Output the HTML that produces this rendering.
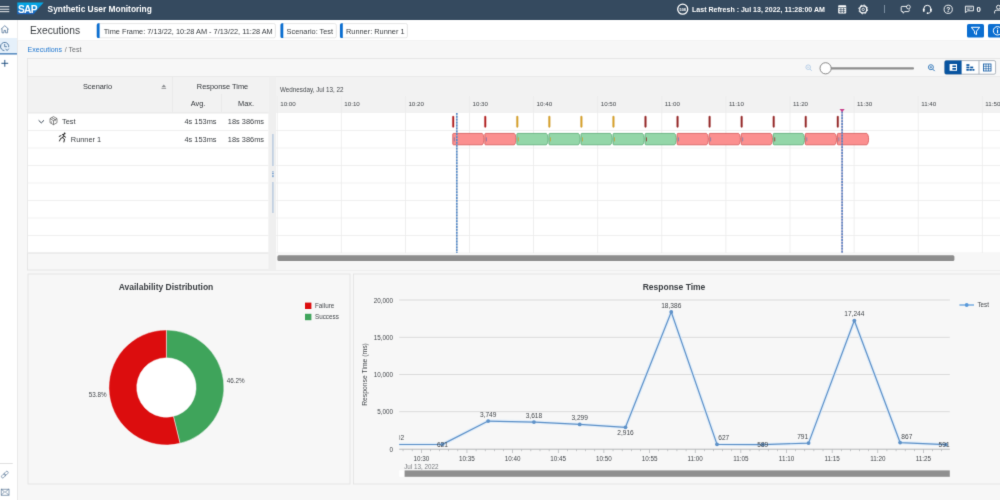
<!DOCTYPE html>
<html><head><meta charset="utf-8"><title>Synthetic User Monitoring</title>
<style>
html,body{margin:0;padding:0;width:1000px;height:500px;overflow:hidden;background:#f7f7f7;}
body{font-family:"Liberation Sans", sans-serif;position:relative;}
svg{position:absolute;left:0;top:0;font-family:"Liberation Sans", sans-serif;will-change:transform;}
#wrap{position:absolute;left:0;top:0;width:1000px;height:500px;overflow:hidden;}
</style></head><body>
<div id="wrap">
<svg width="1000" height="500" viewBox="0 0 1000 500">
<defs><filter id="soft" x="0" y="0" width="1000" height="500" filterUnits="userSpaceOnUse" color-interpolation-filters="sRGB"><feConvolveMatrix order="3" kernelMatrix="0.011 0.084 0.011 0.084 0.62 0.084 0.011 0.084 0.011" edgeMode="duplicate" preserveAlpha="true"/></filter></defs>
<g filter="url(#soft)">
<rect x="0" y="0" width="1000" height="500" fill="#f7f7f7"/>
<g id="shell">
<rect x="0" y="0" width="1000" height="20" fill="#354a5f"/>
<rect x="0" y="6.25" width="9.3" height="0.9" fill="#fff"/>
<rect x="0" y="8.75" width="9.3" height="0.9" fill="#fff"/>
<rect x="0" y="11.25" width="9.3" height="0.9" fill="#fff"/>
<defs><linearGradient id="sapg" x1="0" y1="0" x2="0" y2="1"><stop offset="0" stop-color="#00b1eb"/><stop offset="1" stop-color="#1e5fbb"/></linearGradient></defs>
<path d="M17.3 2.4 H43.6 L33.6 14.2 H17.3 Z" fill="url(#sapg)"/>
<text x="18" y="12.7" font-size="10.2" fill="#fff" text-anchor="start" font-weight="bold" letter-spacing="-0.7">SAP</text>
<text x="47.6" y="11.9" font-size="8.4" fill="#fff" text-anchor="start" font-weight="bold" >Synthetic User Monitoring</text>
<circle cx="682.7" cy="9.2" r="5" fill="none" stroke="#fff" stroke-width="1.3"/>
<text x="682.7" y="10.6" font-size="3.8" fill="#fff" text-anchor="middle" font-weight="bold" >508</text>
<text x="692" y="11.9" font-size="7.05" fill="#fff" text-anchor="start" font-weight="bold" >Last Refresh : Jul 13, 2022, 11:28:00 AM</text>
<rect x="838.2" y="5.2" width="8" height="8.4" rx="0.8" fill="#fff"/>
<path d="M838.2 7.6 h8 M839 9.7 h6.4 M839 11.7 h6.4 M840.9 8 v5 M843.6 8 v5" stroke="#354a5f" stroke-width="0.7" fill="none"/>
<circle cx="863.2" cy="9.4" r="3.5" fill="none" stroke="#fff" stroke-width="1.1"/>
<circle cx="863.2" cy="9.4" r="4.4" fill="none" stroke="#fff" stroke-width="1" stroke-dasharray="1.7 1.75"/>
<circle cx="863.2" cy="9.4" r="1.2" fill="none" stroke="#fff" stroke-width="0.8"/>
<rect x="884" y="5" width="0.9" height="8" fill="#8396a8"/>
<path d="M902 6.4 h5 M902 6.4 a0.8 0.8 0 0 0 -0.8 0.8 v3.6 a0.8 0.8 0 0 0 0.8 0.8 h1 v1.6 l1.8 -1.6 h3.6 a0.8 0.8 0 0 0 0.8 -0.8 v-1.4" fill="none" stroke="#fff" stroke-width="0.9" stroke-linejoin="round"/>
<circle cx="908.4" cy="7" r="1.9" fill="none" stroke="#fff" stroke-width="0.8"/>
<path d="M923.8 10.2 v-1.4 a3.5 3.5 0 0 1 7 0 v1.4" fill="none" stroke="#fff" stroke-width="1"/>
<rect x="922.9" y="8.6" width="1.7" height="3.2" rx="0.6" fill="#fff"/><rect x="930" y="8.6" width="1.7" height="3.2" rx="0.6" fill="#fff"/>
<path d="M930.9 11.6 a3 2 0 0 1 -2.6 1.6" fill="none" stroke="#fff" stroke-width="0.8"/><circle cx="927.6" cy="13.2" r="0.9" fill="#fff"/>
<circle cx="948.2" cy="9.3" r="4.1" fill="none" stroke="#fff" stroke-width="0.9"/>
<text x="948.2" y="11.7" font-size="6.6" fill="#fff" text-anchor="middle" font-weight="bold" >?</text>
<path d="M965.4 6.2 h8 v4.6 h-5.6 l-2.4 1.8 z" fill="none" stroke="#fff" stroke-width="0.9" stroke-linejoin="round"/>
<path d="M966.8 8 h5.2 M966.8 9.4 h3" stroke="#fff" stroke-width="0.6"/>
<text x="976.4" y="12.2" font-size="7.8" fill="#fff" text-anchor="start" font-weight="bold" >0</text>
<circle cx="998.4" cy="7.2" r="1.9" fill="none" stroke="#fff" stroke-width="0.9"/>
<path d="M994.6 13.4 v-1.6 a1.6 1.6 0 0 1 1.6 -1.6 h5" fill="none" stroke="#fff" stroke-width="0.9"/>
</g>
<g id="side">
<rect x="0" y="20" width="17" height="480" fill="#fff"/>
<rect x="17" y="20" width="0.8" height="480" fill="#e5e5e5"/>
<rect x="0" y="38" width="17" height="16" fill="#e5f0fa"/>
<rect x="0" y="53.4" width="17" height="1" fill="#0854a0"/>
<path d="M0.9 29.3 l3.9 -3.6 l3.9 3.6 M2 28.6 v4.2 h2 v-2.4 h1.6 v2.4 h2 v-4.2" fill="none" stroke="#56769a" stroke-width="0.8" stroke-linejoin="round"/>
<path d="M4.4 50.6 a4.1 4.1 0 1 1 4.3 -3.4" fill="none" stroke="#3f6a97" stroke-width="0.85"/>
<path d="M4.7 44 v2.7 h2.2" fill="none" stroke="#3f6a97" stroke-width="0.8"/>
<path d="M5.6 48.8 l1.5 1.8 l1.7 -2" fill="none" stroke="#3f6a97" stroke-width="0.8"/>
<path d="M1.4 63.3 h6.8 M4.8 59.9 v6.8" stroke="#1f4e80" stroke-width="0.95" fill="none"/>
<rect x="0" y="463" width="12.8" height="0.8" fill="#d9d9d9"/>
<g transform="translate(4.8 474.6) rotate(-45)" fill="none" stroke="#5b7897" stroke-width="0.65"><rect x="-4.2" y="-1.3" width="4.8" height="2.6" rx="1.3"/><rect x="-0.6" y="-1.3" width="4.8" height="2.6" rx="1.3"/></g>
<rect x="1.2" y="489.2" width="7.8" height="6" fill="none" stroke="#5b7897" stroke-width="0.7"/><path d="M1.2 489 l3.8 3.4 l3.8 -3.4 M1.2 495.2 l2.8 -2.8 M8.8 495.2 l-2.8 -2.8" fill="none" stroke="#5b7897" stroke-width="0.7"/>
</g>
<g id="ptitle">
<rect x="17.8" y="20" width="983" height="20.5" fill="#fff"/>
<rect x="17.8" y="40.2" width="983" height="0.6" fill="#efefef"/>
<text x="30" y="33.8" font-size="10.25" fill="#3a3e42" text-anchor="start" font-weight="normal" >Executions</text>
<rect x="96.8" y="23.6" width="178.6" height="14.2" rx="1.6" fill="#fff" stroke="#dcdcdc" stroke-width="0.7"/>
<path d="M99.6 23.3 h-1.2 a1.6 1.6 0 0 0 -1.6 1.6 v11.6 a1.6 1.6 0 0 0 1.6 1.6 h1.2 z" fill="#0a6ed1"/>
<text x="103.8" y="33.5" font-size="7.36" fill="#3a3e42" text-anchor="start" font-weight="normal" >Time Frame: 7/13/22, 10:28 AM - 7/13/22, 11:28 AM</text>
<rect x="280.5" y="23.6" width="55.8" height="14.2" rx="1.6" fill="#fff" stroke="#dcdcdc" stroke-width="0.7"/>
<path d="M283.3 23.3 h-1.2 a1.6 1.6 0 0 0 -1.6 1.6 v11.6 a1.6 1.6 0 0 0 1.6 1.6 h1.2 z" fill="#0a6ed1"/>
<text x="286.6" y="33.5" font-size="7.36" fill="#3a3e42" text-anchor="start" font-weight="normal" >Scenario: Test</text>
<rect x="340" y="23.6" width="67.4" height="14.2" rx="1.6" fill="#fff" stroke="#dcdcdc" stroke-width="0.7"/>
<path d="M342.8 23.3 h-1.2 a1.6 1.6 0 0 0 -1.6 1.6 v11.6 a1.6 1.6 0 0 0 1.6 1.6 h1.2 z" fill="#0a6ed1"/>
<text x="346" y="33.5" font-size="7.36" fill="#3a3e42" text-anchor="start" font-weight="normal" >Runner: Runner 1</text>
<rect x="967" y="24" width="17" height="13.6" rx="1.6" fill="#0a6ed1"/>
<rect x="988" y="24" width="17" height="13.6" rx="1.6" fill="#0a6ed1"/>
<path d="M971.3 27.3 h8.4 l-3.2 3.9 v3.4 l-2 -1.2 v-2.2 z" fill="none" stroke="#fff" stroke-width="1" stroke-linejoin="round"/>
<circle cx="997.5" cy="30.8" r="4.2" fill="none" stroke="#fff" stroke-width="1"/>
<rect x="997" y="30" width="1.1" height="3.2" fill="#fff"/><rect x="997" y="28.2" width="1.1" height="1.1" fill="#fff"/>
<text x="27.6" y="52.1" font-size="7.05" fill="#1f77d0" text-anchor="start" font-weight="normal" >Executions</text>
<text x="64.8" y="52.1" font-size="7.05" fill="#6a6d70" text-anchor="start" font-weight="normal" >/ Test</text>
</g>
<g id="gantt">
<rect x="27.5" y="58.5" width="980" height="211.5" fill="#f7f7f7" stroke="#e2e2e2" stroke-width="0.8"/>
<rect x="27.5" y="76" width="980" height="0.8" fill="#e4e4e4"/>
<rect x="27.9" y="76.8" width="240.6" height="36.2" fill="#f2f2f2"/>
<rect x="276" y="76.8" width="724" height="36.2" fill="#f2f2f2"/>
<rect x="27.9" y="113" width="240.6" height="140" fill="#fff"/>
<rect x="276" y="113" width="724" height="140" fill="#fff"/>
<rect x="268.5" y="76.4" width="7.5" height="193" fill="#efefef"/>
<rect x="272.6" y="134" width="0.7" height="32" fill="#7fa3cc"/>
<rect x="272.6" y="182" width="0.7" height="31" fill="#7fa3cc"/>
<rect x="272" y="171.6" width="1.8" height="0.7" fill="#4f86c4"/>
<rect x="272" y="173.2" width="1.8" height="0.7" fill="#4f86c4"/>
<rect x="272" y="174.79999999999998" width="1.8" height="0.7" fill="#4f86c4"/>
<rect x="272" y="176.4" width="1.8" height="0.7" fill="#4f86c4"/>
<rect x="27.9" y="112.6" width="240.6" height="0.8" fill="#e4e4e4"/>
<rect x="172" y="76.4" width="0.8" height="36" fill="#e8e8e8"/>
<rect x="221" y="94" width="0.8" height="18" fill="#e8e8e8"/>
<text x="97.5" y="88.6" font-size="7.4" fill="#32363a" text-anchor="middle" font-weight="normal" >Scenario</text>
<path d="M161.5 87.2 l2.3 -2.6 l2.3 2.6 z M161.5 88 h4.6 v0.7 h-4.6 z" fill="#8a8d90"/>
<text x="222.5" y="88.6" font-size="7.4" fill="#32363a" text-anchor="middle" font-weight="normal" >Response Time</text>
<text x="198" y="106.2" font-size="7.4" fill="#32363a" text-anchor="middle" font-weight="normal" >Avg.</text>
<text x="246" y="106.2" font-size="7.4" fill="#32363a" text-anchor="middle" font-weight="normal" >Max.</text>
<rect x="27.9" y="130.10" width="240.6" height="0.8" fill="#ededed"/>
<rect x="276" y="130.10" width="724" height="0.8" fill="#ededed"/>
<rect x="27.9" y="147.60" width="240.6" height="0.8" fill="#ededed"/>
<rect x="276" y="147.60" width="724" height="0.8" fill="#ededed"/>
<rect x="27.9" y="165.10" width="240.6" height="0.8" fill="#ededed"/>
<rect x="276" y="165.10" width="724" height="0.8" fill="#ededed"/>
<rect x="27.9" y="182.60" width="240.6" height="0.8" fill="#ededed"/>
<rect x="276" y="182.60" width="724" height="0.8" fill="#ededed"/>
<rect x="27.9" y="200.10" width="240.6" height="0.8" fill="#ededed"/>
<rect x="276" y="200.10" width="724" height="0.8" fill="#ededed"/>
<rect x="27.9" y="217.60" width="240.6" height="0.8" fill="#ededed"/>
<rect x="276" y="217.60" width="724" height="0.8" fill="#ededed"/>
<rect x="27.9" y="235.10" width="240.6" height="0.8" fill="#ededed"/>
<rect x="276" y="235.10" width="724" height="0.8" fill="#ededed"/>
<rect x="27.9" y="252.60" width="240.6" height="0.8" fill="#ededed"/>
<rect x="276" y="252.60" width="724" height="0.8" fill="#ededed"/>
<path d="M38.6 120.3 l2.7 2.6 l2.7 -2.6" fill="none" stroke="#3c4a58" stroke-width="1"/>
<path d="M53.5 116.6 l3.5 2 v4.1 l-3.5 2 l-3.5 -2 v-4.1 z M50 118.6 l3.5 2 l3.5 -2 M53.5 120.6 v4.1 M51.7 117.6 l3.5 2 v1.6 M51.4 121.4 v1.4" fill="none" stroke="#4a4a4a" stroke-width="0.65" stroke-linejoin="round"/>
<text x="62" y="124.3" font-size="7.4" fill="#3a3e42" text-anchor="start" font-weight="normal" >Test</text>
<text x="216.5" y="124.3" font-size="7.4" fill="#3a3e42" text-anchor="end" font-weight="normal" >4s 153ms</text>
<text x="264" y="124.3" font-size="7.4" fill="#3a3e42" text-anchor="end" font-weight="normal" >18s 386ms</text>
<path d="M62.5 134.6 l1.6 0 l-1.4 3 l1.8 1.4 l-0.6 3 M62.7 137.6 l-2 0.8 l-1.2 2.6 M61 135.6 l-1.8 0.8 M64.2 136.2 l1.4 1" fill="none" stroke="#222" stroke-width="1" stroke-linecap="round" stroke-linejoin="round"/>
<circle cx="64.6" cy="133.4" r="0.9" fill="#222"/>
<text x="70.8" y="141.7" font-size="7.4" fill="#3a3e42" text-anchor="start" font-weight="normal" >Runner 1</text>
<text x="216.5" y="141.7" font-size="7.4" fill="#3a3e42" text-anchor="end" font-weight="normal" >4s 153ms</text>
<text x="264" y="141.7" font-size="7.4" fill="#3a3e42" text-anchor="end" font-weight="normal" >18s 386ms</text>
<text x="280" y="92" font-size="6.3" fill="#45494d" text-anchor="start" font-weight="normal" >Wednesday, Jul 13, 22</text>
<rect x="276.80" y="96" width="0.8" height="157" fill="#ebebeb"/>
<text x="280.20" y="106.2" font-size="6.2" fill="#45494d" text-anchor="start" font-weight="normal" >10:00</text>
<rect x="340.90" y="96" width="0.8" height="157" fill="#ebebeb"/>
<text x="344.30" y="106.2" font-size="6.2" fill="#45494d" text-anchor="start" font-weight="normal" >10:10</text>
<rect x="405.00" y="96" width="0.8" height="157" fill="#ebebeb"/>
<text x="408.40" y="106.2" font-size="6.2" fill="#45494d" text-anchor="start" font-weight="normal" >10:20</text>
<rect x="469.10" y="96" width="0.8" height="157" fill="#ebebeb"/>
<text x="472.50" y="106.2" font-size="6.2" fill="#45494d" text-anchor="start" font-weight="normal" >10:30</text>
<rect x="533.20" y="96" width="0.8" height="157" fill="#ebebeb"/>
<text x="536.60" y="106.2" font-size="6.2" fill="#45494d" text-anchor="start" font-weight="normal" >10:40</text>
<rect x="597.30" y="96" width="0.8" height="157" fill="#ebebeb"/>
<text x="600.70" y="106.2" font-size="6.2" fill="#45494d" text-anchor="start" font-weight="normal" >10:50</text>
<rect x="661.40" y="96" width="0.8" height="157" fill="#ebebeb"/>
<text x="664.80" y="106.2" font-size="6.2" fill="#45494d" text-anchor="start" font-weight="normal" >11:00</text>
<rect x="725.50" y="96" width="0.8" height="157" fill="#ebebeb"/>
<text x="728.90" y="106.2" font-size="6.2" fill="#45494d" text-anchor="start" font-weight="normal" >11:10</text>
<rect x="789.60" y="96" width="0.8" height="157" fill="#ebebeb"/>
<text x="793.00" y="106.2" font-size="6.2" fill="#45494d" text-anchor="start" font-weight="normal" >11:20</text>
<rect x="853.70" y="96" width="0.8" height="157" fill="#ebebeb"/>
<text x="857.10" y="106.2" font-size="6.2" fill="#45494d" text-anchor="start" font-weight="normal" >11:30</text>
<rect x="917.80" y="96" width="0.8" height="157" fill="#ebebeb"/>
<text x="921.20" y="106.2" font-size="6.2" fill="#45494d" text-anchor="start" font-weight="normal" >11:40</text>
<rect x="981.90" y="96" width="0.8" height="157" fill="#ebebeb"/>
<text x="985.30" y="106.2" font-size="6.2" fill="#45494d" text-anchor="start" font-weight="normal" >11:50</text>
<rect x="452.35" y="116" width="1.7" height="11.4" rx="0.85" fill="#a51c1c" stroke="#d23a3a" stroke-width="0.35"/>
<rect x="484.40" y="116" width="1.7" height="11.4" rx="0.85" fill="#a51c1c" stroke="#d23a3a" stroke-width="0.35"/>
<rect x="516.45" y="116" width="1.7" height="11.4" rx="0.85" fill="#d9a227" stroke="#c99a3a" stroke-width="0.35"/>
<rect x="548.50" y="116" width="1.7" height="11.4" rx="0.85" fill="#d9a227" stroke="#c99a3a" stroke-width="0.35"/>
<rect x="580.55" y="116" width="1.7" height="11.4" rx="0.85" fill="#d9a227" stroke="#c99a3a" stroke-width="0.35"/>
<rect x="612.60" y="116" width="1.7" height="11.4" rx="0.85" fill="#d9a227" stroke="#c99a3a" stroke-width="0.35"/>
<rect x="644.65" y="116" width="1.7" height="11.4" rx="0.85" fill="#8f2626" stroke="#a83a3a" stroke-width="0.35"/>
<rect x="676.70" y="116" width="1.7" height="11.4" rx="0.85" fill="#8f2626" stroke="#a83a3a" stroke-width="0.35"/>
<rect x="708.75" y="116" width="1.7" height="11.4" rx="0.85" fill="#8f2626" stroke="#a83a3a" stroke-width="0.35"/>
<rect x="740.80" y="116" width="1.7" height="11.4" rx="0.85" fill="#8f2626" stroke="#a83a3a" stroke-width="0.35"/>
<rect x="772.85" y="116" width="1.7" height="11.4" rx="0.85" fill="#8f2626" stroke="#a83a3a" stroke-width="0.35"/>
<rect x="804.90" y="116" width="1.7" height="11.4" rx="0.85" fill="#8f2626" stroke="#a83a3a" stroke-width="0.35"/>
<rect x="836.95" y="116" width="1.7" height="11.4" rx="0.85" fill="#8f2626" stroke="#a83a3a" stroke-width="0.35"/>
<path d="M453.60 133.4 H482.20 C484.60 135.4 484.60 142.8 482.20 144.8 H453.60 Q452.80 144.8 452.80 144.0 V134.20000000000002 Q452.80 133.4 453.60 133.4 Z" fill="#fb8f8f" stroke="#d86060" stroke-width="0.9"/>
<rect x="453.80" y="137.2" width="0.9" height="4.2" rx="0.4" fill="#6a6fa8" opacity="0.85"/>
<path d="M485.65 133.4 H514.25 C516.65 135.4 516.65 142.8 514.25 144.8 H485.65 Q484.85 144.8 484.85 144.0 V134.20000000000002 Q484.85 133.4 485.65 133.4 Z" fill="#fb8f8f" stroke="#d86060" stroke-width="0.9"/>
<rect x="485.85" y="137.2" width="0.9" height="4.2" rx="0.4" fill="#6a6fa8" opacity="0.85"/>
<path d="M517.70 133.4 H546.30 C548.70 135.4 548.70 142.8 546.30 144.8 H517.70 Q516.90 144.8 516.90 144.0 V134.20000000000002 Q516.90 133.4 517.70 133.4 Z" fill="#93d6a8" stroke="#62b07c" stroke-width="0.9"/>
<rect x="517.90" y="137.2" width="0.9" height="4.2" rx="0.4" fill="#c9a030" opacity="0.85"/>
<path d="M549.75 133.4 H578.35 C580.75 135.4 580.75 142.8 578.35 144.8 H549.75 Q548.95 144.8 548.95 144.0 V134.20000000000002 Q548.95 133.4 549.75 133.4 Z" fill="#93d6a8" stroke="#62b07c" stroke-width="0.9"/>
<rect x="549.95" y="137.2" width="0.9" height="4.2" rx="0.4" fill="#c9a030" opacity="0.85"/>
<path d="M581.80 133.4 H610.40 C612.80 135.4 612.80 142.8 610.40 144.8 H581.80 Q581.00 144.8 581.00 144.0 V134.20000000000002 Q581.00 133.4 581.80 133.4 Z" fill="#93d6a8" stroke="#62b07c" stroke-width="0.9"/>
<rect x="582.00" y="137.2" width="0.9" height="4.2" rx="0.4" fill="#c9a030" opacity="0.85"/>
<path d="M613.85 133.4 H642.45 C644.85 135.4 644.85 142.8 642.45 144.8 H613.85 Q613.05 144.8 613.05 144.0 V134.20000000000002 Q613.05 133.4 613.85 133.4 Z" fill="#93d6a8" stroke="#62b07c" stroke-width="0.9"/>
<rect x="614.05" y="137.2" width="0.9" height="4.2" rx="0.4" fill="#c9a030" opacity="0.85"/>
<path d="M645.90 133.4 H674.50 C676.90 135.4 676.90 142.8 674.50 144.8 H645.90 Q645.10 144.8 645.10 144.0 V134.20000000000002 Q645.10 133.4 645.90 133.4 Z" fill="#93d6a8" stroke="#62b07c" stroke-width="0.9"/>
<rect x="646.10" y="137.2" width="0.9" height="4.2" rx="0.4" fill="#8f2626" opacity="0.85"/>
<path d="M677.95 133.4 H706.55 C708.95 135.4 708.95 142.8 706.55 144.8 H677.95 Q677.15 144.8 677.15 144.0 V134.20000000000002 Q677.15 133.4 677.95 133.4 Z" fill="#fb8f8f" stroke="#d86060" stroke-width="0.9"/>
<rect x="678.15" y="137.2" width="0.9" height="4.2" rx="0.4" fill="#6a7fb0" opacity="0.85"/>
<path d="M710.00 133.4 H738.60 C741.00 135.4 741.00 142.8 738.60 144.8 H710.00 Q709.20 144.8 709.20 144.0 V134.20000000000002 Q709.20 133.4 710.00 133.4 Z" fill="#fb8f8f" stroke="#d86060" stroke-width="0.9"/>
<rect x="710.20" y="137.2" width="0.9" height="4.2" rx="0.4" fill="#6a7fb0" opacity="0.85"/>
<path d="M742.05 133.4 H770.65 C773.05 135.4 773.05 142.8 770.65 144.8 H742.05 Q741.25 144.8 741.25 144.0 V134.20000000000002 Q741.25 133.4 742.05 133.4 Z" fill="#fb8f8f" stroke="#d86060" stroke-width="0.9"/>
<rect x="742.25" y="137.2" width="0.9" height="4.2" rx="0.4" fill="#6a7fb0" opacity="0.85"/>
<path d="M774.10 133.4 H802.70 C805.10 135.4 805.10 142.8 802.70 144.8 H774.10 Q773.30 144.8 773.30 144.0 V134.20000000000002 Q773.30 133.4 774.10 133.4 Z" fill="#93d6a8" stroke="#62b07c" stroke-width="0.9"/>
<rect x="774.30" y="137.2" width="0.9" height="4.2" rx="0.4" fill="#8f2626" opacity="0.85"/>
<path d="M806.15 133.4 H834.75 C837.15 135.4 837.15 142.8 834.75 144.8 H806.15 Q805.35 144.8 805.35 144.0 V134.20000000000002 Q805.35 133.4 806.15 133.4 Z" fill="#fb8f8f" stroke="#d86060" stroke-width="0.9"/>
<rect x="806.35" y="137.2" width="0.9" height="4.2" rx="0.4" fill="#6a7fb0" opacity="0.85"/>
<path d="M838.20 133.4 H866.80 C869.20 135.4 869.20 142.8 866.80 144.8 H838.20 Q837.40 144.8 837.40 144.0 V134.20000000000002 Q837.40 133.4 838.20 133.4 Z" fill="#fb8f8f" stroke="#d86060" stroke-width="0.9"/>
<rect x="838.40" y="137.2" width="0.9" height="4.2" rx="0.4" fill="#6a7fb0" opacity="0.85"/>
<line x1="456.8" y1="113" x2="456.8" y2="253" stroke="#8aa0b8" stroke-width="1.7" opacity="0.55"/><line x1="456.8" y1="113" x2="456.8" y2="253" stroke="#4d86cc" stroke-width="1.4" stroke-dasharray="1.8 1.1"/>
<line x1="842.1" y1="111.5" x2="842.1" y2="253" stroke="#9a86b0" stroke-width="1.7" opacity="0.6"/><line x1="842.1" y1="111.5" x2="842.1" y2="253" stroke="#4a7fc4" stroke-width="1.4" stroke-dasharray="1.8 1.1"/>
<path d="M839.5 109 h5.2 l-2.6 3.2 z" fill="#c8408c"/>
<rect x="276" y="253" width="724" height="17" fill="#f7f7f7"/>
<rect x="277.4" y="255.2" width="677" height="5.8" rx="1.5" fill="#8d8d8d"/>
<rect x="27.9" y="252.6" width="240.6" height="0.8" fill="#e0e0e0"/>
<circle cx="808.2" cy="67.2" r="2.3" fill="none" stroke="#a9c6e4" stroke-width="0.8"/><path d="M809.9 69 l1.8 1.8" stroke="#a9c6e4" stroke-width="0.9"/><path d="M807.1 67.2 h2.2" stroke="#a9c6e4" stroke-width="0.7"/>
<rect x="830" y="67.3" width="84" height="2.1" rx="1" fill="#8e8e8e"/>
<circle cx="825.6" cy="68.3" r="5.6" fill="#fff" stroke="#7d7d7d" stroke-width="0.9"/>
<circle cx="930.9" cy="67.2" r="2.5" fill="none" stroke="#2d74b8" stroke-width="0.9"/><path d="M932.7 69.1 l2 2" stroke="#2d74b8" stroke-width="1"/><path d="M929.6 67.2 h2.6 M930.9 65.9 v2.6" stroke="#2d74b8" stroke-width="0.7"/>
<rect x="944.6" y="60.6" width="51" height="13.6" rx="1.6" fill="#fff" stroke="#9aa4ae" stroke-width="0.8"/>
<path d="M946.2 60.6 h15.4 v13.6 h-15.4 a1.6 1.6 0 0 1 -1.6 -1.6 v-10.4 a1.6 1.6 0 0 1 1.6 -1.6 z" fill="#0854a0"/>
<rect x="978.6" y="60.6" width="0.8" height="13.6" fill="#9aa4ae"/>
<rect x="949.6" y="64" width="7.4" height="6.8" fill="#fff"/><rect x="952.4" y="65.4" width="3.6" height="1.6" fill="#0854a0"/><rect x="952.4" y="68" width="3.6" height="1.8" fill="#0854a0"/>
<rect x="966.4" y="64.2" width="3" height="1.7" fill="#0854a0"/>
<rect x="966.4" y="66.6" width="3" height="1.7" fill="#0854a0"/>
<rect x="970.2" y="66.6" width="3" height="1.7" fill="#0854a0"/>
<rect x="966.4" y="69" width="2.4" height="1.7" fill="#0854a0"/>
<rect x="969.4" y="69" width="2.4" height="1.7" fill="#0854a0"/>
<rect x="972.4" y="69" width="2.0" height="1.7" fill="#0854a0"/>
<rect x="983.6" y="64" width="7.4" height="7" fill="none" stroke="#0854a0" stroke-width="0.8"/><path d="M986 64 v7 M988.5 64 v7 M983.6 66.3 h7.4 M983.6 68.7 h7.4" stroke="#0854a0" stroke-width="0.6"/>
</g>
<g id="donut">
<rect x="28" y="274" width="322" height="210" fill="#f7f7f7" stroke="#e2e2e2" stroke-width="0.8"/>
<text x="166" y="290.2" font-size="8.5" fill="#3a3e42" text-anchor="middle" font-weight="bold" >Availability Distribution</text>
<circle cx="166.4" cy="387.5" r="30.0" fill="#fff"/>
<path d="M166.40 330.00 A57.5 57.5 0 0 1 180.00 443.37 L173.42 416.36 A29.7 29.7 0 0 0 166.40 357.80 Z" fill="#3fa45b" stroke="#f7f7f7" stroke-width="0.5"/>
<path d="M180.00 443.37 A57.5 57.5 0 1 1 166.40 330.00 L166.40 357.80 A29.7 29.7 0 1 0 173.42 416.36 Z" fill="#dc0d0e" stroke="#f7f7f7" stroke-width="0.5"/>
<text x="226.8" y="383" font-size="6.3" fill="#45494d" text-anchor="start" font-weight="normal" >46.2%</text>
<text x="106.7" y="397" font-size="6.3" fill="#45494d" text-anchor="end" font-weight="normal" >53.8%</text>
<rect x="305" y="302.6" width="6.4" height="6.4" fill="#dc0d0e"/>
<rect x="305" y="313.8" width="6.4" height="6.4" fill="#3fa45b"/>
<text x="315" y="308" font-size="6.3" fill="#45494d" text-anchor="start" font-weight="normal" >Failure</text>
<text x="315" y="319.2" font-size="6.3" fill="#45494d" text-anchor="start" font-weight="normal" >Success</text>
</g>
<g id="line">
<rect x="353.4" y="274" width="660" height="210" fill="#f7f7f7" stroke="#e2e2e2" stroke-width="0.8"/>
<text x="674" y="290.2" font-size="8.5" fill="#3a3e42" text-anchor="middle" font-weight="bold" >Response Time</text>
<rect x="399.2" y="299.60" width="550.6" height="0.8" fill="#d4d4d4"/>
<text x="393" y="302.60" font-size="6.3" fill="#45494d" text-anchor="end" font-weight="normal" >20,000</text>
<rect x="399.2" y="336.85" width="550.6" height="0.8" fill="#d4d4d4"/>
<text x="393" y="339.85" font-size="6.3" fill="#45494d" text-anchor="end" font-weight="normal" >15,000</text>
<rect x="399.2" y="374.10" width="550.6" height="0.8" fill="#d4d4d4"/>
<text x="393" y="377.10" font-size="6.3" fill="#45494d" text-anchor="end" font-weight="normal" >10,000</text>
<rect x="399.2" y="411.35" width="550.6" height="0.8" fill="#d4d4d4"/>
<text x="393" y="414.35" font-size="6.3" fill="#45494d" text-anchor="end" font-weight="normal" >5,000</text>
<text x="393" y="451.60" font-size="6.3" fill="#45494d" text-anchor="end" font-weight="normal" >0</text>
<rect x="399.2" y="448.8" width="550.6" height="0.7" fill="#9a9da0"/>
<text x="0" y="0" font-size="6.8" fill="#45494d" text-anchor="middle" font-weight="normal" transform="translate(367.4 374.5) rotate(-90)">Response Time (ms)</text>
<rect x="402.74" y="449.4" width="0.6" height="1.8" fill="#a4a7aa"/>
<rect x="411.87" y="449.4" width="0.6" height="1.8" fill="#a4a7aa"/>
<rect x="421.00" y="449.4" width="0.6" height="3.6" fill="#a4a7aa"/>
<rect x="430.13" y="449.4" width="0.6" height="1.8" fill="#a4a7aa"/>
<rect x="439.26" y="449.4" width="0.6" height="1.8" fill="#a4a7aa"/>
<rect x="448.39" y="449.4" width="0.6" height="1.8" fill="#a4a7aa"/>
<rect x="457.52" y="449.4" width="0.6" height="1.8" fill="#a4a7aa"/>
<rect x="466.65" y="449.4" width="0.6" height="3.6" fill="#a4a7aa"/>
<rect x="475.78" y="449.4" width="0.6" height="1.8" fill="#a4a7aa"/>
<rect x="484.91" y="449.4" width="0.6" height="1.8" fill="#a4a7aa"/>
<rect x="494.04" y="449.4" width="0.6" height="1.8" fill="#a4a7aa"/>
<rect x="503.17" y="449.4" width="0.6" height="1.8" fill="#a4a7aa"/>
<rect x="512.30" y="449.4" width="0.6" height="3.6" fill="#a4a7aa"/>
<rect x="521.43" y="449.4" width="0.6" height="1.8" fill="#a4a7aa"/>
<rect x="530.56" y="449.4" width="0.6" height="1.8" fill="#a4a7aa"/>
<rect x="539.69" y="449.4" width="0.6" height="1.8" fill="#a4a7aa"/>
<rect x="548.82" y="449.4" width="0.6" height="1.8" fill="#a4a7aa"/>
<rect x="557.95" y="449.4" width="0.6" height="3.6" fill="#a4a7aa"/>
<rect x="567.08" y="449.4" width="0.6" height="1.8" fill="#a4a7aa"/>
<rect x="576.21" y="449.4" width="0.6" height="1.8" fill="#a4a7aa"/>
<rect x="585.34" y="449.4" width="0.6" height="1.8" fill="#a4a7aa"/>
<rect x="594.47" y="449.4" width="0.6" height="1.8" fill="#a4a7aa"/>
<rect x="603.60" y="449.4" width="0.6" height="3.6" fill="#a4a7aa"/>
<rect x="612.73" y="449.4" width="0.6" height="1.8" fill="#a4a7aa"/>
<rect x="621.86" y="449.4" width="0.6" height="1.8" fill="#a4a7aa"/>
<rect x="630.99" y="449.4" width="0.6" height="1.8" fill="#a4a7aa"/>
<rect x="640.12" y="449.4" width="0.6" height="1.8" fill="#a4a7aa"/>
<rect x="649.25" y="449.4" width="0.6" height="3.6" fill="#a4a7aa"/>
<rect x="658.38" y="449.4" width="0.6" height="1.8" fill="#a4a7aa"/>
<rect x="667.51" y="449.4" width="0.6" height="1.8" fill="#a4a7aa"/>
<rect x="676.64" y="449.4" width="0.6" height="1.8" fill="#a4a7aa"/>
<rect x="685.77" y="449.4" width="0.6" height="1.8" fill="#a4a7aa"/>
<rect x="694.90" y="449.4" width="0.6" height="3.6" fill="#a4a7aa"/>
<rect x="704.03" y="449.4" width="0.6" height="1.8" fill="#a4a7aa"/>
<rect x="713.16" y="449.4" width="0.6" height="1.8" fill="#a4a7aa"/>
<rect x="722.29" y="449.4" width="0.6" height="1.8" fill="#a4a7aa"/>
<rect x="731.42" y="449.4" width="0.6" height="1.8" fill="#a4a7aa"/>
<rect x="740.55" y="449.4" width="0.6" height="3.6" fill="#a4a7aa"/>
<rect x="749.68" y="449.4" width="0.6" height="1.8" fill="#a4a7aa"/>
<rect x="758.81" y="449.4" width="0.6" height="1.8" fill="#a4a7aa"/>
<rect x="767.94" y="449.4" width="0.6" height="1.8" fill="#a4a7aa"/>
<rect x="777.07" y="449.4" width="0.6" height="1.8" fill="#a4a7aa"/>
<rect x="786.20" y="449.4" width="0.6" height="3.6" fill="#a4a7aa"/>
<rect x="795.33" y="449.4" width="0.6" height="1.8" fill="#a4a7aa"/>
<rect x="804.46" y="449.4" width="0.6" height="1.8" fill="#a4a7aa"/>
<rect x="813.59" y="449.4" width="0.6" height="1.8" fill="#a4a7aa"/>
<rect x="822.72" y="449.4" width="0.6" height="1.8" fill="#a4a7aa"/>
<rect x="831.85" y="449.4" width="0.6" height="3.6" fill="#a4a7aa"/>
<rect x="840.98" y="449.4" width="0.6" height="1.8" fill="#a4a7aa"/>
<rect x="850.11" y="449.4" width="0.6" height="1.8" fill="#a4a7aa"/>
<rect x="859.24" y="449.4" width="0.6" height="1.8" fill="#a4a7aa"/>
<rect x="868.37" y="449.4" width="0.6" height="1.8" fill="#a4a7aa"/>
<rect x="877.50" y="449.4" width="0.6" height="3.6" fill="#a4a7aa"/>
<rect x="886.63" y="449.4" width="0.6" height="1.8" fill="#a4a7aa"/>
<rect x="895.76" y="449.4" width="0.6" height="1.8" fill="#a4a7aa"/>
<rect x="904.89" y="449.4" width="0.6" height="1.8" fill="#a4a7aa"/>
<rect x="914.02" y="449.4" width="0.6" height="1.8" fill="#a4a7aa"/>
<rect x="923.15" y="449.4" width="0.6" height="3.6" fill="#a4a7aa"/>
<rect x="932.28" y="449.4" width="0.6" height="1.8" fill="#a4a7aa"/>
<rect x="941.41" y="449.4" width="0.6" height="1.8" fill="#a4a7aa"/>
<text x="421.30" y="461.2" font-size="6.3" fill="#45494d" text-anchor="middle" font-weight="normal" >10:30</text>
<text x="466.95" y="461.2" font-size="6.3" fill="#45494d" text-anchor="middle" font-weight="normal" >10:35</text>
<text x="512.60" y="461.2" font-size="6.3" fill="#45494d" text-anchor="middle" font-weight="normal" >10:40</text>
<text x="558.25" y="461.2" font-size="6.3" fill="#45494d" text-anchor="middle" font-weight="normal" >10:45</text>
<text x="603.90" y="461.2" font-size="6.3" fill="#45494d" text-anchor="middle" font-weight="normal" >10:50</text>
<text x="649.55" y="461.2" font-size="6.3" fill="#45494d" text-anchor="middle" font-weight="normal" >10:55</text>
<text x="695.20" y="461.2" font-size="6.3" fill="#45494d" text-anchor="middle" font-weight="normal" >11:00</text>
<text x="740.85" y="461.2" font-size="6.3" fill="#45494d" text-anchor="middle" font-weight="normal" >11:05</text>
<text x="786.50" y="461.2" font-size="6.3" fill="#45494d" text-anchor="middle" font-weight="normal" >11:10</text>
<text x="832.15" y="461.2" font-size="6.3" fill="#45494d" text-anchor="middle" font-weight="normal" >11:15</text>
<text x="877.80" y="461.2" font-size="6.3" fill="#45494d" text-anchor="middle" font-weight="normal" >11:20</text>
<text x="923.45" y="461.2" font-size="6.3" fill="#45494d" text-anchor="middle" font-weight="normal" >11:25</text>
<text x="404.2" y="468.6" font-size="6.3" fill="#7a7d80" text-anchor="start" font-weight="normal" >Jul 13, 2022</text>
<clipPath id="pc"><rect x="399.2" y="290" width="550.6" height="170"/></clipPath>
<g clip-path="url(#pc)">
<polyline fill="none" stroke="#dcebfa" stroke-width="3.4" stroke-linejoin="round" opacity="0.8" points="396.63,444.52 442.40,444.37 488.17,421.07 533.94,422.05 579.71,424.42 625.48,427.28 671.25,312.02 717.02,444.33 762.79,444.61 808.56,443.11 854.33,320.53 900.10,442.54 945.87,444.60"/>
<polyline fill="none" stroke="#5f92c8" stroke-width="1.2" stroke-linejoin="round" points="396.63,444.52 442.40,444.37 488.17,421.07 533.94,422.05 579.71,424.42 625.48,427.28 671.25,312.02 717.02,444.33 762.79,444.61 808.56,443.11 854.33,320.53 900.10,442.54 945.87,444.60"/>
<circle cx="396.63" cy="444.52" r="1.9" fill="#5f92c8"/>
<circle cx="442.40" cy="444.37" r="1.9" fill="#5f92c8"/>
<circle cx="488.17" cy="421.07" r="1.9" fill="#5f92c8"/>
<circle cx="533.94" cy="422.05" r="1.9" fill="#5f92c8"/>
<circle cx="579.71" cy="424.42" r="1.9" fill="#5f92c8"/>
<circle cx="625.48" cy="427.28" r="1.9" fill="#5f92c8"/>
<circle cx="671.25" cy="312.02" r="1.9" fill="#5f92c8"/>
<circle cx="717.02" cy="444.33" r="1.9" fill="#5f92c8"/>
<circle cx="762.79" cy="444.61" r="1.9" fill="#5f92c8"/>
<circle cx="808.56" cy="443.11" r="1.9" fill="#5f92c8"/>
<circle cx="854.33" cy="320.53" r="1.9" fill="#5f92c8"/>
<circle cx="900.10" cy="442.54" r="1.9" fill="#5f92c8"/>
<circle cx="945.87" cy="444.60" r="1.9" fill="#5f92c8"/>
<text x="398.60" y="439.60" font-size="6.6" fill="#45494d" text-anchor="middle" font-weight="normal" >602</text>
<text x="442.40" y="446.67" font-size="6.6" fill="#45494d" text-anchor="middle" font-weight="normal" >621</text>
<text x="488.17" y="416.87" font-size="6.6" fill="#45494d" text-anchor="middle" font-weight="normal" >3,749</text>
<text x="533.94" y="417.85" font-size="6.6" fill="#45494d" text-anchor="middle" font-weight="normal" >3,618</text>
<text x="579.71" y="420.22" font-size="6.6" fill="#45494d" text-anchor="middle" font-weight="normal" >3,299</text>
<text x="625.48" y="435.28" font-size="6.6" fill="#45494d" text-anchor="middle" font-weight="normal" >2,916</text>
<text x="671.25" y="307.82" font-size="6.6" fill="#45494d" text-anchor="middle" font-weight="normal" >18,386</text>
<text x="718.22" y="440.33" font-size="6.6" fill="#45494d" text-anchor="start" font-weight="normal" >627</text>
<text x="762.79" y="446.91" font-size="6.6" fill="#45494d" text-anchor="middle" font-weight="normal" >589</text>
<text x="808.16" y="439.11" font-size="6.6" fill="#45494d" text-anchor="end" font-weight="normal" >791</text>
<text x="854.33" y="316.33" font-size="6.6" fill="#45494d" text-anchor="middle" font-weight="normal" >17,244</text>
<text x="901.30" y="438.54" font-size="6.6" fill="#45494d" text-anchor="start" font-weight="normal" >867</text>
<text x="949.60" y="446.90" font-size="6.6" fill="#45494d" text-anchor="end" font-weight="normal" >591</text>
</g>
<rect x="399.2" y="470.4" width="5.4" height="6.4" fill="#fff"/>
<rect x="404.6" y="470.4" width="545.2" height="6.4" fill="#8f8f8f"/>
<line x1="959.4" y1="305" x2="974" y2="305" stroke="#5899da" stroke-width="1.2"/><circle cx="966.7" cy="305" r="1.9" fill="#5899da"/>
<text x="977.4" y="307.2" font-size="6.3" fill="#45494d" text-anchor="start" font-weight="normal" >Test</text>
</g>
</g></svg></div></body></html>
